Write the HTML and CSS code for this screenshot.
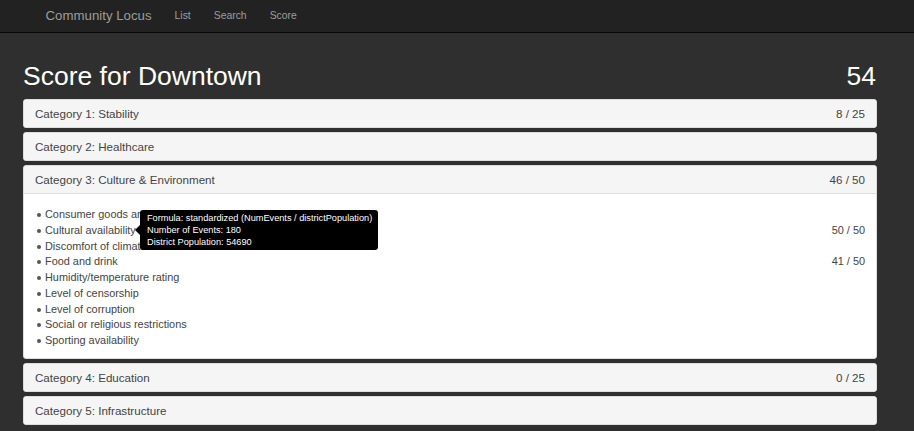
FILE: index.html
```html
<!DOCTYPE html>
<html>
<head>
<meta charset="utf-8">
<title>Community Locus</title>
<link rel="stylesheet" href="styles.css">
</head>
<body>
<nav class="navbar">
  <a class="brand">Community Locus</a>
  <a class="nav-link">List</a>
  <a class="nav-link">Search</a>
  <a class="nav-link">Score</a>
</nav>
<main class="main">
  <div class="title-row">
    <h1 class="title">Score for Downtown</h1>
    <span class="total">54</span>
  </div>
  <section class="panel">
    <div class="panel-heading"><span>Category 1: Stability</span><span>8 / 25</span></div>
  </section>
  <section class="panel">
    <div class="panel-heading"><span>Category 2: Healthcare</span></div>
  </section>
  <section class="panel">
    <div class="panel-heading open"><span>Category 3: Culture &amp; Environment</span><span>46 / 50</span></div>
    <div class="panel-body">
      <ul class="items">
        <li>Consumer goods and services</li>
        <li class="has-tip"><span class="item-score">50 / 50</span>Cultural availability
          <div class="tooltip">
            <div>Formula: standardized (NumEvents / districtPopulation)</div>
            <div>Number of Events: 180</div>
            <div>District Population: 54690</div>
          </div>
        </li>
        <li>Discomfort of climate to travelers</li>
        <li><span class="item-score">41 / 50</span>Food and drink</li>
        <li>Humidity/temperature rating</li>
        <li>Level of censorship</li>
        <li>Level of corruption</li>
        <li>Social or religious restrictions</li>
        <li>Sporting availability</li>
      </ul>
    </div>
  </section>
  <section class="panel">
    <div class="panel-heading"><span>Category 4: Education</span><span>0 / 25</span></div>
  </section>
  <section class="panel">
    <div class="panel-heading"><span>Category 5: Infrastructure</span></div>
  </section>
</main>
</body>
</html>
```
FILE: styles.css
```css
* { box-sizing: border-box; }
html, body {
  margin: 0;
  padding: 0;
  background: #2f2f2f;
  font-family: "Liberation Sans", Arial, sans-serif;
  overflow: hidden;
}
.navbar {
  height: 33px;
  background: #222222;
  border-bottom: 1px solid #080808;
  display: flex;
  align-items: center;
  padding-left: 34px;
}
.navbar a {
  color: #9d9d9d;
  padding: 0 11.5px;
  line-height: 28px;
}
.brand {
  font-size: 13.25px;
}
.nav-link {
  font-size: 10.4px;
}
.main {
  padding: 29px 37px 0 23px;
}
.title-row {
  display: flex;
  justify-content: space-between;
  align-items: baseline;
  color: #ffffff;
  font-size: 26.5px;
  line-height: 29px;
  margin-bottom: 8px;
}
.title {
  margin: 0;
  font-size: 26.5px;
  font-weight: normal;
}
.total {
  font-size: 26.5px;
  padding-right: 1px;
}
.panel {
  background: #ffffff;
  border: 1px solid #dddddd;
  border-radius: 3px;
  margin-bottom: 4px;
}
.panel-heading {
  background: #f5f5f5;
  color: #444444;
  font-size: 11.6px;
  line-height: 13px;
  padding: 7px 11px;
  display: flex;
  justify-content: space-between;
  border-radius: 2px;
}
.panel-heading.open {
  border-bottom: 1px solid #dddddd;
  border-radius: 2px 2px 0 0;
}
.panel-body {
  padding: 13px 11px 9px 11px;
}
.items {
  margin: 0;
  padding-left: 10px;
  list-style: none;
  color: #444444;
  font-size: 10.9px;
  line-height: 15.75px;
}
.items li {
  position: relative;
}
.items li::before {
  content: "";
  position: absolute;
  left: -8px;
  top: 6px;
  width: 4px;
  height: 4px;
  border-radius: 50%;
  background: #555555;
}
.item-score {
  float: right;
}
.tooltip {
  position: absolute;
  left: 95px;
  top: -12.5px;
  background: #000000;
  color: #ffffff;
  font-size: 9.2px;
  line-height: 12px;
  padding: 2px 6px 2px 7px;
  border-radius: 3px;
  white-space: nowrap;
  z-index: 5;
}
.tooltip::before {
  content: "";
  position: absolute;
  left: -5px;
  top: 15px;
  border-style: solid;
  border-width: 5px 5px 5px 0;
  border-color: transparent #000000 transparent transparent;
}
```
